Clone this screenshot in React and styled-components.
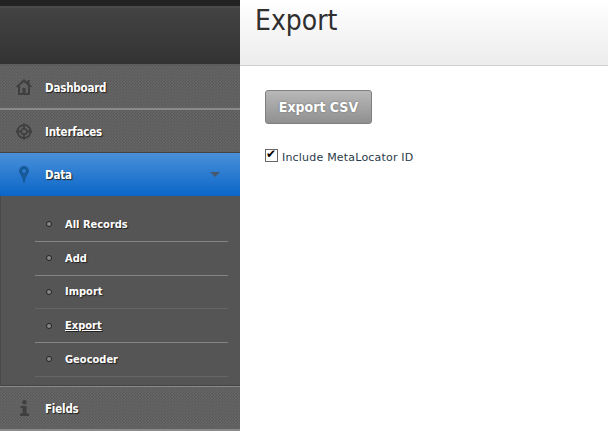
import React from "react";
import styled, { createGlobalStyle } from "styled-components";

const GlobalStyle = createGlobalStyle`
    html, body {
        margin: 0;
        padding: 0;
        height: 100%;
        overflow: hidden;
        background: #fff;
    }
    #root {
        height: 100%;
    }
`;

const Page = styled.div`
    display: flex;
    width: 608px;
    height: 431px;
    overflow: hidden;
    font-family: "DejaVu Sans Condensed", "DejaVu Sans", sans-serif;
`;

const Sidebar = styled.aside`
    width: 240px;
    flex-shrink: 0;
    background: #555;
`;

const TopStrip = styled.div`
    height: 6px;
    background: #222;
    border-bottom: 2px solid #4a4a4a;
`;

const Brand = styled.div`
    height: 56px;
    background: linear-gradient(#434343, #333);
    border-bottom: 2px solid #5c5c5c;
`;

const MenuItem = styled.div`
    display: flex;
    align-items: center;
    height: 42px;
    padding-left: 16px;
    box-sizing: content-box;
    color: #fff;
    font-size: 11.5px;
    font-weight: 700;
    letter-spacing: -0.2px;
    text-shadow: 1px 1px 1px #222;
    background-color: #666;
    background-image:
        linear-gradient(45deg, rgba(0, 0, 0, .12) 25%, transparent 25%, transparent 75%, rgba(0, 0, 0, .12) 75%),
        linear-gradient(45deg, rgba(0, 0, 0, .12) 25%, transparent 25%, transparent 75%, rgba(0, 0, 0, .12) 75%);
    background-size: 3px 3px;
    background-position: 0 0, 1.5px 1.5px;
    border-top: ${(p) => (p.$topLine ? "1px solid #8a8a8a" : "none")};
    border-bottom: ${(p) => (p.$thin ? "1px solid #444" : "2px solid #8a8a8a")};
`;

const ItemLabel = styled.span`
    padding-top: 2px;
`;

const ActiveItem = styled.div`
    display: flex;
    align-items: center;
    height: 43px;
    padding: 0 0 1px 16px;
    box-sizing: border-box;
    color: #fff;
    font-size: 11.5px;
    font-weight: 700;
    letter-spacing: -0.2px;
    text-shadow: 1px 1px 1px #222;
    background: linear-gradient(#4a90d9, #0a66c8);
`;

const IconSlot = styled.span`
    display: flex;
    justify-content: center;
    width: 16px;
    margin-right: 13px;
    color: ${(p) => p.$color || "#3f3f3f"};
`;

const Caret = styled.span`
    width: 0;
    height: 0;
    margin-left: auto;
    margin-right: 20px;
    border-left: 5px solid transparent;
    border-right: 5px solid transparent;
    border-top: 5px solid #46596e;
`;

const SubMenu = styled.ul`
    list-style: none;
    margin: 0;
    height: 190px;
    padding: 12px 12px 0 34px;
    box-sizing: border-box;
    background: #555;
    border-bottom: 1px solid #444;
    border-left: 1px solid #4a4a4a;
`;

const SubItem = styled.li`
    display: flex;
    align-items: center;
    height: 33.75px;
    box-sizing: border-box;
    padding-left: 11px;
    color: #fff;
    font-size: 11px;
    font-weight: 700;
    text-shadow: 1px 1px 1px #222;
    text-decoration: ${(p) => (p.$current ? "underline" : "none")};
    border-bottom: 1px solid ${(p) => (p.$dim ? "#666" : "#848484")};
`;

const Dot = styled.span`
    width: 4px;
    height: 4px;
    margin-right: 13px;
    border-radius: 50%;
    background: #888;
    border: 1px solid #222;
`;

const Main = styled.main`
    flex: 1;
    background: #fff;
`;

const TitleBar = styled.header`
    height: 66px;
    padding-left: 15px;
    box-sizing: border-box;
    background: linear-gradient(#fff, #ececec);
    border-bottom: 1px solid #cfcfcf;
`;

const Title = styled.h1`
    margin: 0;
    color: #2f2f2f;
    font-size: 28px;
    font-weight: 400;
    line-height: 41px;
`;

const Content = styled.div`
    padding: 24px 25px 0;
`;

const ExportButton = styled.button`
    display: block;
    width: 107px;
    height: 34px;
    padding: 0;
    color: #fff;
    font-family: inherit;
    font-size: 14px;
    font-weight: 700;
    text-shadow: 0 0 2px #666;
    background: linear-gradient(#b8b8b8, #909090);
    border: 1px solid #7f7f7f;
    border-radius: 3px;
`;

const CheckRow = styled.label`
    display: flex;
    align-items: flex-start;
    margin-top: 25px;
    color: #2b3a4a;
    font-family: "DejaVu Sans", sans-serif;
    font-size: 11px;
    letter-spacing: 0.2px;
`;

const CheckText = styled.span`
    padding-top: 2px;
`;

const Check = styled.input`
    appearance: none;
    position: relative;
    width: 13px;
    height: 13px;
    margin: 0 4px 0 0;
    box-sizing: border-box;
    background: #fff;
    border: 1px solid #666;

    &:checked::after {
        content: "✔";
        position: absolute;
        top: -3px;
        left: 0;
        color: #000;
        font-size: 12px;
        line-height: 14px;
    }
`;

const HomeIcon = () => (
    <svg width="16" height="16" viewBox="0 0 16 16" fill="currentColor">
        <path d="M8 0 0 7.500 1 8.500 2 7.600V16h12V7.600l1 .9 1-1L13.500 5V1h-2v2zM4 6.500 8 3l4 3.500V14h-2.500V9h-3v5H4z" />
    </svg>
);

const TargetIcon = () => (
    <svg width="17" height="17" viewBox="0 0 17 17" fill="none" stroke="currentColor">
        <circle cx="8.500" cy="8.500" r="7" strokeWidth="2" />
        <circle cx="8.500" cy="8.500" r="3" strokeWidth="1.500" />
        <path d="M8.500 0v6M8.500 11v6M0 8.500h6M11 8.500h6" strokeWidth="2" />
    </svg>
);

const PinIcon = () => (
    <svg width="10" height="17" viewBox="0 0 10 17" fill="currentColor">
        <path fillRule="evenodd" d="M5 0a5 5 0 0 0-5 5c0 3 3.500 4.500 4.500 12h1C6.500 9.500 10 8 10 5A5 5 0 0 0 5 0zm0 3.200a1.800 1.800 0 1 1 0 3.600 1.800 1.800 0 0 1 0-3.600z" />
    </svg>
);

const InfoIcon = () => (
    <svg width="9" height="16" viewBox="0 0 9 16" fill="currentColor">
        <circle cx="4.500" cy="2.200" r="2.200" />
        <path d="M.5 6h6v7.500H9V16H0v-2.500h2.500V8H.5z" />
    </svg>
);

const subItems = [
    { label: "All Records" },
    { label: "Add" },
    { label: "Import", dim: true },
    { label: "Export", current: true },
    { label: "Geocoder", dim: true }
];

const App = () => {
    return (
        <Page>
            <GlobalStyle />
            <Sidebar>
                <TopStrip />
                <Brand />
                <MenuItem>
                    <IconSlot><HomeIcon /></IconSlot>
                    <ItemLabel>Dashboard</ItemLabel>
                </MenuItem>
                <MenuItem $thin>
                    <IconSlot><TargetIcon /></IconSlot>
                    <ItemLabel>Interfaces</ItemLabel>
                </MenuItem>
                <ActiveItem>
                    <IconSlot $color="#175a9c"><PinIcon /></IconSlot>
                    <ItemLabel>Data</ItemLabel>
                    <Caret />
                </ActiveItem>
                <SubMenu>
                    {subItems.map((item) => (
                        <SubItem key={item.label} $dim={item.dim} $current={item.current}>
                            <Dot />
                            {item.label}
                        </SubItem>
                    ))}
                </SubMenu>
                <MenuItem $topLine>
                    <IconSlot><InfoIcon /></IconSlot>
                    <ItemLabel>Fields</ItemLabel>
                </MenuItem>
            </Sidebar>
            <Main>
                <TitleBar>
                    <Title>Export</Title>
                </TitleBar>
                <Content>
                    <ExportButton>Export CSV</ExportButton>
                    <CheckRow>
                        <Check type="checkbox" defaultChecked />
                        <CheckText>Include MetaLocator ID</CheckText>
                    </CheckRow>
                </Content>
            </Main>
        </Page>
    );
};

export default App;
